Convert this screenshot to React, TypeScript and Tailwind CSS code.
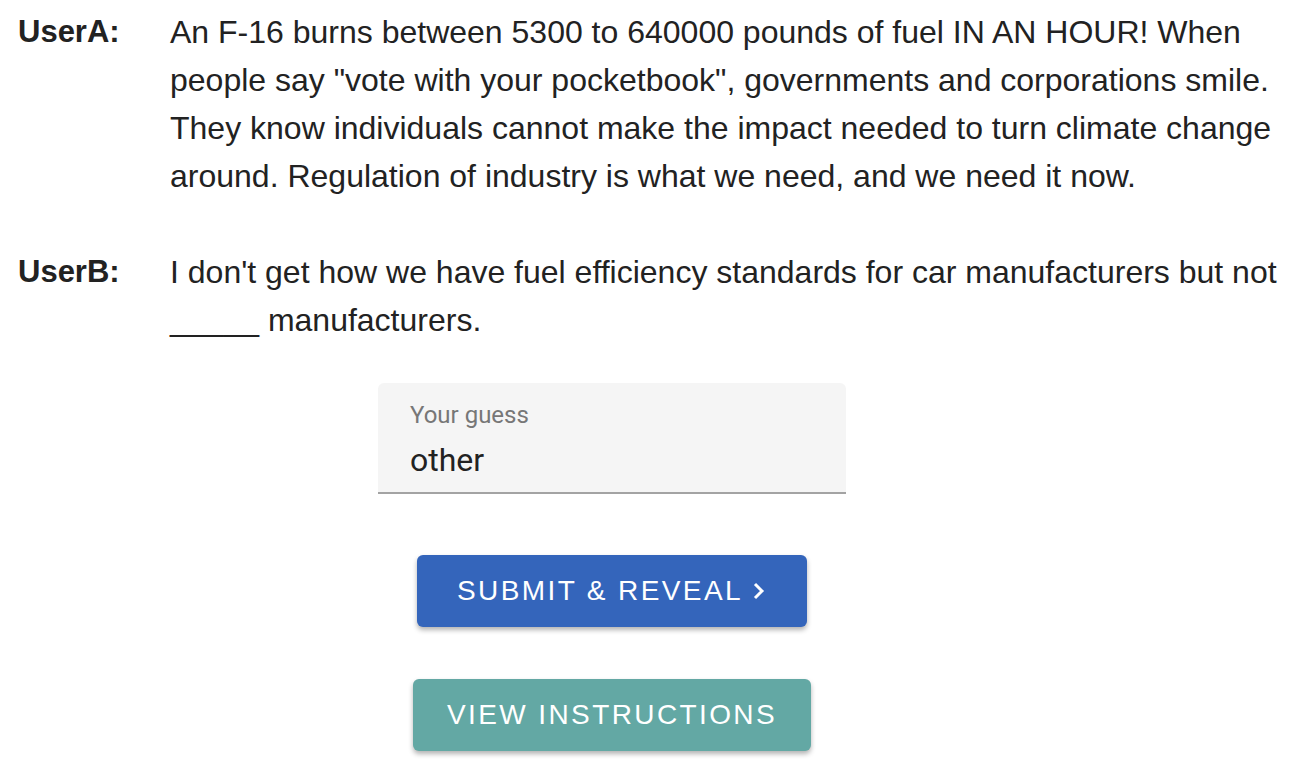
import React from "react";

const rows = [
  {
    user: "UserA:",
    text: 'An F-16 burns between 5300 to 640000 pounds of fuel IN AN HOUR! When people say "vote with your pocketbook", governments and corporations smile. They know individuals cannot make the impact needed to turn climate change around. Regulation of industry is what we need, and we need it now.',
  },
  {
    user: "UserB:",
    text: "I don't get how we have fuel efficiency standards for car manufacturers but not _____ manufacturers.",
  },
];

const App: React.FC = () => {
  return (
    <div className="min-h-screen bg-white text-[#222] font-['Liberation_Sans',Arial,sans-serif]">
      <div className="pt-2 pl-[18px] pr-2 flex flex-col gap-12">
        {rows.map((r) => (
          <div key={r.user} className="flex leading-[48px]">
            <div className="w-[152px] shrink-0 font-bold text-[31px]">{r.user}</div>
            <div className="flex-1 text-[32px]">{r.text}</div>
          </div>
        ))}
      </div>

      <div className="w-[1224px] flex flex-col items-center mt-[39px]">
        {/* 入力欄 */}
        <div className="w-[468px] h-[111px] bg-[#f5f5f5] rounded-t-md border-b-2 border-[#a3a3a3] px-8 pt-[18px] font-['Roboto',sans-serif]">
          <div className="text-[24px] leading-7 text-[#777]">Your guess</div>
          <div className="text-[32px] leading-10 text-[#222] mt-[11px]">other</div>
        </div>

        <button className="mt-[61px] w-[390px] h-[72px] rounded-md bg-[#3465bb] text-white text-[28px] tracking-[2.4px] shadow-[0_3px_5px_rgba(0,0,0,0.3)] flex items-center justify-center gap-2">
          <span>SUBMIT &amp; REVEAL</span>
          <svg width="16" height="20" viewBox="0 0 16 20" fill="none" stroke="white" strokeWidth="3">
            <path d="M4 3 L11 10 L4 17" />
          </svg>
        </button>

        <button className="mt-[52px] w-[398px] h-[72px] rounded-md bg-[#63a8a4] text-white text-[28px] tracking-[2.4px] shadow-[0_3px_5px_rgba(0,0,0,0.3)]">
          VIEW INSTRUCTIONS
        </button>
      </div>
    </div>
  );
};

export default App;
